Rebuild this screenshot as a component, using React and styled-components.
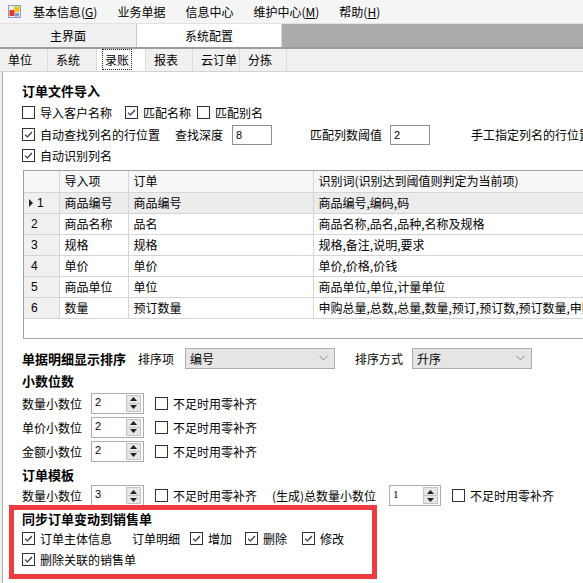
import React from 'react';
import styled, { createGlobalStyle } from 'styled-components';

const GlobalStyle = createGlobalStyle`
  html, body {
    margin: 0;
    padding: 0;
    background: #fff;
  }
  body {
    width: 583px;
    height: 583px;
    overflow: hidden;
    font-family: "Noto Sans CJK SC", "Noto Sans", sans-serif;
    font-size: 12px;
    color: #000;
  }
`;

const Page = styled.div`
  width: 583px;
  height: 583px;
  overflow: hidden;
  display: flex;
  flex-direction: column;
  background: #fff;
`;

const MenuBar = styled.div`
  display: flex;
  align-items: center;
  height: 23px;
  background: #f5f5f5;
  flex-shrink: 0;
`;

const AppIcon = styled.svg`
  width: 13px;
  height: 13px;
  margin: 0 2px 0 8px;
`;

const MenuItem = styled.div`
  padding: 0 10px;
  line-height: 23px;
  white-space: nowrap;
`;

const DocTabs = styled.div`
  display: flex;
  height: 23px;
  background: #ababab;
  border-top: 1px solid #e2e2e2;
  border-bottom: 2px solid #9c9c9c;
  flex-shrink: 0;
`;

const DocTab = styled.div`
  width: ${(p) => p.$w}px;
  box-sizing: border-box;
  text-align: center;
  line-height: 23px;
  background: ${(p) => (p.$active ? '#fff' : '#f0f0f0')};
  border-right: 1px solid ${(p) => (p.$active ? '#d8d8d8' : '#c8c8c8')};
`;

const SubTabs = styled.div`
  display: flex;
  height: 22px;
  background: #f0f0f0;
  border-bottom: 1px solid #d2d2d2;
  flex-shrink: 0;
`;

const SubTab = styled.div`
  width: ${(p) => p.$w}px;
  box-sizing: border-box;
  padding-left: 7px;
  line-height: 22px;
  border-right: 1px solid #dadada;
  background: ${(p) => (p.$active ? '#fff' : 'transparent')};
  span {
    outline: ${(p) => (p.$active ? '1px dotted #222' : 'none')};
    outline-offset: 1px;
    padding: 0 1px;
  }
`;

const Body = styled.div`
  flex: 1;
  display: flex;
  background: #f0f0f0;
  min-height: 0;
`;

const Panel = styled.div`
  flex: 1;
  min-width: 0;
  margin-left: 2px;
  border-left: 1px solid #a9a9a9;
  background: #fff;
  padding: 8px 0 0 19px;
  display: flex;
  flex-direction: column;
  overflow: hidden;
`;

const Row = styled.div`
  display: flex;
  align-items: center;
  height: ${(p) => p.$h || 22}px;
  margin-top: ${(p) => p.$mt || 0}px;
  white-space: nowrap;
  flex-shrink: 0;
`;

const Heading = styled.div`
  font-weight: bold;
  font-size: 13px;
  width: ${(p) => (p.$w ? `${p.$w}px` : 'auto')};
  flex-shrink: 0;
`;

const Text = styled.span`
  display: inline-block;
  width: ${(p) => (p.$w ? `${p.$w}px` : 'auto')};
  flex-shrink: 0;
`;

const CheckLabel = styled.label`
  display: inline-flex;
  align-items: center;
  width: ${(p) => (p.$w ? `${p.$w}px` : 'auto')};
  flex-shrink: 0;
`;

const Box = styled.span`
  width: 13px;
  height: 13px;
  box-sizing: border-box;
  border: 1px solid #333;
  background: #fff;
  margin-right: 5px;
  display: inline-flex;
  align-items: center;
  justify-content: center;
`;

const TextBox = styled.div`
  width: ${(p) => p.$w}px;
  height: 20px;
  box-sizing: border-box;
  border: 1px solid #8f8f8f;
  padding-left: 3px;
  font-family: "Liberation Sans", Arial, sans-serif;
  font-size: 11px;
  line-height: 18px;
  margin-right: ${(p) => p.$mr || 0}px;
  flex-shrink: 0;
`;

const Spin = styled.div`
  width: ${(p) => p.$w || 53}px;
  height: 21px;
  box-sizing: border-box;
  border: 1px solid #acacac;
  display: flex;
  align-items: stretch;
  margin-right: 11px;
  flex-shrink: 0;
`;

const SpinValue = styled.div`
  flex: 1;
  padding-left: 3px;
  font-family: ${(p) => (p.$serif ? '"Liberation Serif", serif' : '"Liberation Sans", Arial, sans-serif')};
  font-size: 11px;
  line-height: 17px;
`;

const SpinButtons = styled.div`
  width: 13px;
  margin: 1px 2px 1px 0;
  display: flex;
  flex-direction: column;
  border: 1px solid #c4c4c4;
  background: #e6e6e6;
`;

const SpinHalf = styled.div`
  flex: 1;
  display: flex;
  align-items: center;
  justify-content: center;
  & + & {
    border-top: 1px solid #c4c4c4;
  }
`;

const Select = styled.div`
  width: ${(p) => p.$w}px;
  height: 21px;
  box-sizing: border-box;
  border: 1px solid #adadad;
  background: #e5e5e5;
  display: flex;
  align-items: center;
  justify-content: space-between;
  padding: 0 6px 0 4px;
  margin-right: ${(p) => p.$mr || 0}px;
  flex-shrink: 0;
`;

const Grid = styled.div`
  width: 620px;
  height: 169px;
  box-sizing: border-box;
  border: 1px solid #a0a0a0;
  margin-top: 4px;
  margin-left: 1px;
  background: #fff;
  overflow: hidden;
  flex-shrink: 0;
`;

const Table = styled.table`
  border-collapse: collapse;
  table-layout: fixed;
  width: 618px;
  td {
    height: 21px;
    padding: 0 0 0 5px;
    box-sizing: border-box;
    border-right: 1px solid #d5d5d5;
    border-bottom: 1px solid #d5d5d5;
    white-space: nowrap;
    overflow: hidden;
    line-height: 20px;
  }
`;

const HeadRow = styled.tr`
  td {
    background: #f7f7f7;
  }
`;

const DataRow = styled.tr`
  td {
    background: ${(p) => (p.$selected ? '#ececec' : '#fff')};
  }
`;

const RowHead = styled.td`
  && {
    background: #f0f0f0;
    padding-left: ${(p) => (p.$marker ? 5 : 7)}px;
    font-family: "Liberation Sans", Arial, sans-serif;
  }
`;

const Marker = styled.span`
  display: inline-block;
  width: 0;
  height: 0;
  border-top: 4px solid transparent;
  border-bottom: 4px solid transparent;
  border-left: 4px solid #222;
  margin-right: 4px;
  vertical-align: 0px;
`;

const SyncBox = styled.div`
  width: 368px;
  height: 74px;
  box-sizing: border-box;
  margin: -1px 0 0 -13px;
  padding-left: 8px;
  border: 5px solid #ee3b3f;
  display: flex;
  flex-direction: column;
  flex-shrink: 0;
`;

const Check = ({ checked, w, children }) => (
  <CheckLabel $w={w}>
    <Box>
      {checked && (
        <svg width="11" height="11" viewBox="0 0 11 11">
          <path d="M2 5.6 L4.4 8 L9 3" fill="none" stroke="#333" strokeWidth="1.2" />
        </svg>
      )}
    </Box>
    {children}
  </CheckLabel>
);

const Spinner = ({ value, w, serif }) => (
  <Spin $w={w}>
    <SpinValue $serif={serif}>{value}</SpinValue>
    <SpinButtons>
      <SpinHalf>
        <svg width="7" height="4" viewBox="0 0 7 4"><path d="M0 4 L3.5 0 L7 4 Z" fill="#222" /></svg>
      </SpinHalf>
      <SpinHalf>
        <svg width="7" height="4" viewBox="0 0 7 4"><path d="M0 0 L3.5 4 L7 0 Z" fill="#222" /></svg>
      </SpinHalf>
    </SpinButtons>
  </Spin>
);

const Dropdown = ({ value, w, mr }) => (
  <Select $w={w} $mr={mr}>
    <span>{value}</span>
    <svg width="9" height="6" viewBox="0 0 9 6">
      <path d="M0.5 0.8 L4.5 4.8 L8.5 0.8" fill="none" stroke="#888" strokeWidth="1" />
    </svg>
  </Select>
);

const menus = [
  ['基本信息', 'G'],
  ['业务单据'],
  ['信息中心'],
  ['维护中心', 'M'],
  ['帮助', 'H'],
];

const subTabs = [
  { name: '单位', w: 48 },
  { name: '系统', w: 49 },
  { name: '录账', w: 49, active: true },
  { name: '报表', w: 47 },
  { name: '云订单', w: 47 },
  { name: '分拣', w: 47 },
];

const rows = [
  ['商品编号', '商品编号', '商品编号,编码,码'],
  ['商品名称', '品名', '商品名称,品名,品种,名称及规格'],
  ['规格', '规格', '规格,备注,说明,要求'],
  ['单价', '单价', '单价,价格,价钱'],
  ['商品单位', '单位', '商品单位,单位,计量单位'],
  ['数量', '预订数量', '申购总量,总数,总量,数量,预订,预订数,预订数量,申购数量'],
];

const decimals = ['数量小数位', '单价小数位', '金额小数位'];

export default function App() {
  return (
    <Page>
      <GlobalStyle />
      <MenuBar>
        <AppIcon viewBox="0 0 13 13">
          <rect x="0.5" y="0.5" width="12" height="12" fill="#e8eef6" stroke="#8aa0c0" />
          <rect x="1.5" y="5" width="5" height="6" fill="#e23a2e" />
          <rect x="6" y="1.5" width="5.5" height="5.5" fill="#f2c21a" />
          <rect x="7" y="8" width="4" height="3.5" fill="#6fa3de" />
        </AppIcon>
        {menus.map(([label, key]) => (
          <MenuItem key={label}>
            {label}
            {key && (
              <>
                (<u>{key}</u>)
              </>
            )}
          </MenuItem>
        ))}
      </MenuBar>

      <DocTabs>
        <DocTab $w={137}>主界面</DocTab>
        <DocTab $w={145} $active>系统配置</DocTab>
      </DocTabs>

      <SubTabs>
        {subTabs.map((t) => (
          <SubTab key={t.name} $w={t.w} $active={t.active}>
            <span>{t.name}</span>
          </SubTab>
        ))}
      </SubTabs>

      <Body>
        <Panel>
          <Row $h={20}>
            <Heading>订单文件导入</Heading>
          </Row>
          <Row $h={24}>
            <Check w={103}>导入客户名称</Check>
            <Check w={72} checked>匹配名称</Check>
            <Check>匹配别名</Check>
          </Row>
          <Row $h={21}>
            <Check w={153} checked>自动查找列名的行位置</Check>
            <Text $w={57}>查找深度</Text>
            <TextBox $w={40} $mr={38}>8</TextBox>
            <Text $w={80}>匹配列数阈值</Text>
            <TextBox $w={40} $mr={41}>2</TextBox>
            <Text>手工指定列名的行位置</Text>
          </Row>
          <Row $h={21}>
            <Check checked>自动识别列名</Check>
          </Row>

          <Grid>
            <Table>
              <colgroup>
                <col style={{ width: 35 }} />
                <col style={{ width: 69 }} />
                <col style={{ width: 185 }} />
                <col style={{ width: 329 }} />
              </colgroup>
              <tbody>
                <HeadRow>
                  <td />
                  <td>导入项</td>
                  <td>订单</td>
                  <td>识别词(识别达到阈值则判定为当前项)</td>
                </HeadRow>
                {rows.map((r, i) => (
                  <DataRow key={i} $selected={i === 0}>
                    <RowHead $marker={i === 0}>
                      {i === 0 && <Marker />}
                      {i + 1}
                    </RowHead>
                    <td>{r[0]}</td>
                    <td>{r[1]}</td>
                    <td>{r[2]}</td>
                  </DataRow>
                ))}
              </tbody>
            </Table>
          </Grid>

          <Row $h={22} $mt={8}>
            <Heading $w={116}>单据明细显示排序</Heading>
            <Text $w={47}>排序项</Text>
            <Dropdown value="编号" w={150} mr={20} />
            <Text $w={57}>排序方式</Text>
            <Dropdown value="升序" w={120} />
          </Row>

          <Row $h={22}>
            <Heading>小数位数</Heading>
          </Row>
          {decimals.map((label) => (
            <Row key={label} $h={24}>
              <Text $w={69}>{label}</Text>
              <Spinner value="2" />
              <Check>不足时用零补齐</Check>
            </Row>
          ))}

          <Row $h={22}>
            <Heading>订单模板</Heading>
          </Row>
          <Row $h={21}>
            <Text $w={69}>数量小数位</Text>
            <Spinner value="3" />
            <Check w={117}>不足时用零补齐</Check>
            <Text $w={117}>(生成)总数量小数位</Text>
            <Spinner value="1" w={52} serif />
            <Check>不足时用零补齐</Check>
          </Row>

          <SyncBox>
            <Row $h={17}>
              <Heading>同步订单变动到销售单</Heading>
            </Row>
            <Row $h={22}>
              <Check w={110} checked>订单主体信息</Check>
              <Text $w={58}>订单明细</Text>
              <Check w={55} checked>增加</Check>
              <Check w={57} checked>删除</Check>
              <Check checked>修改</Check>
            </Row>
            <Row $h={21}>
              <Check checked>删除关联的销售单</Check>
            </Row>
          </SyncBox>
        </Panel>
      </Body>
    </Page>
  );
}
